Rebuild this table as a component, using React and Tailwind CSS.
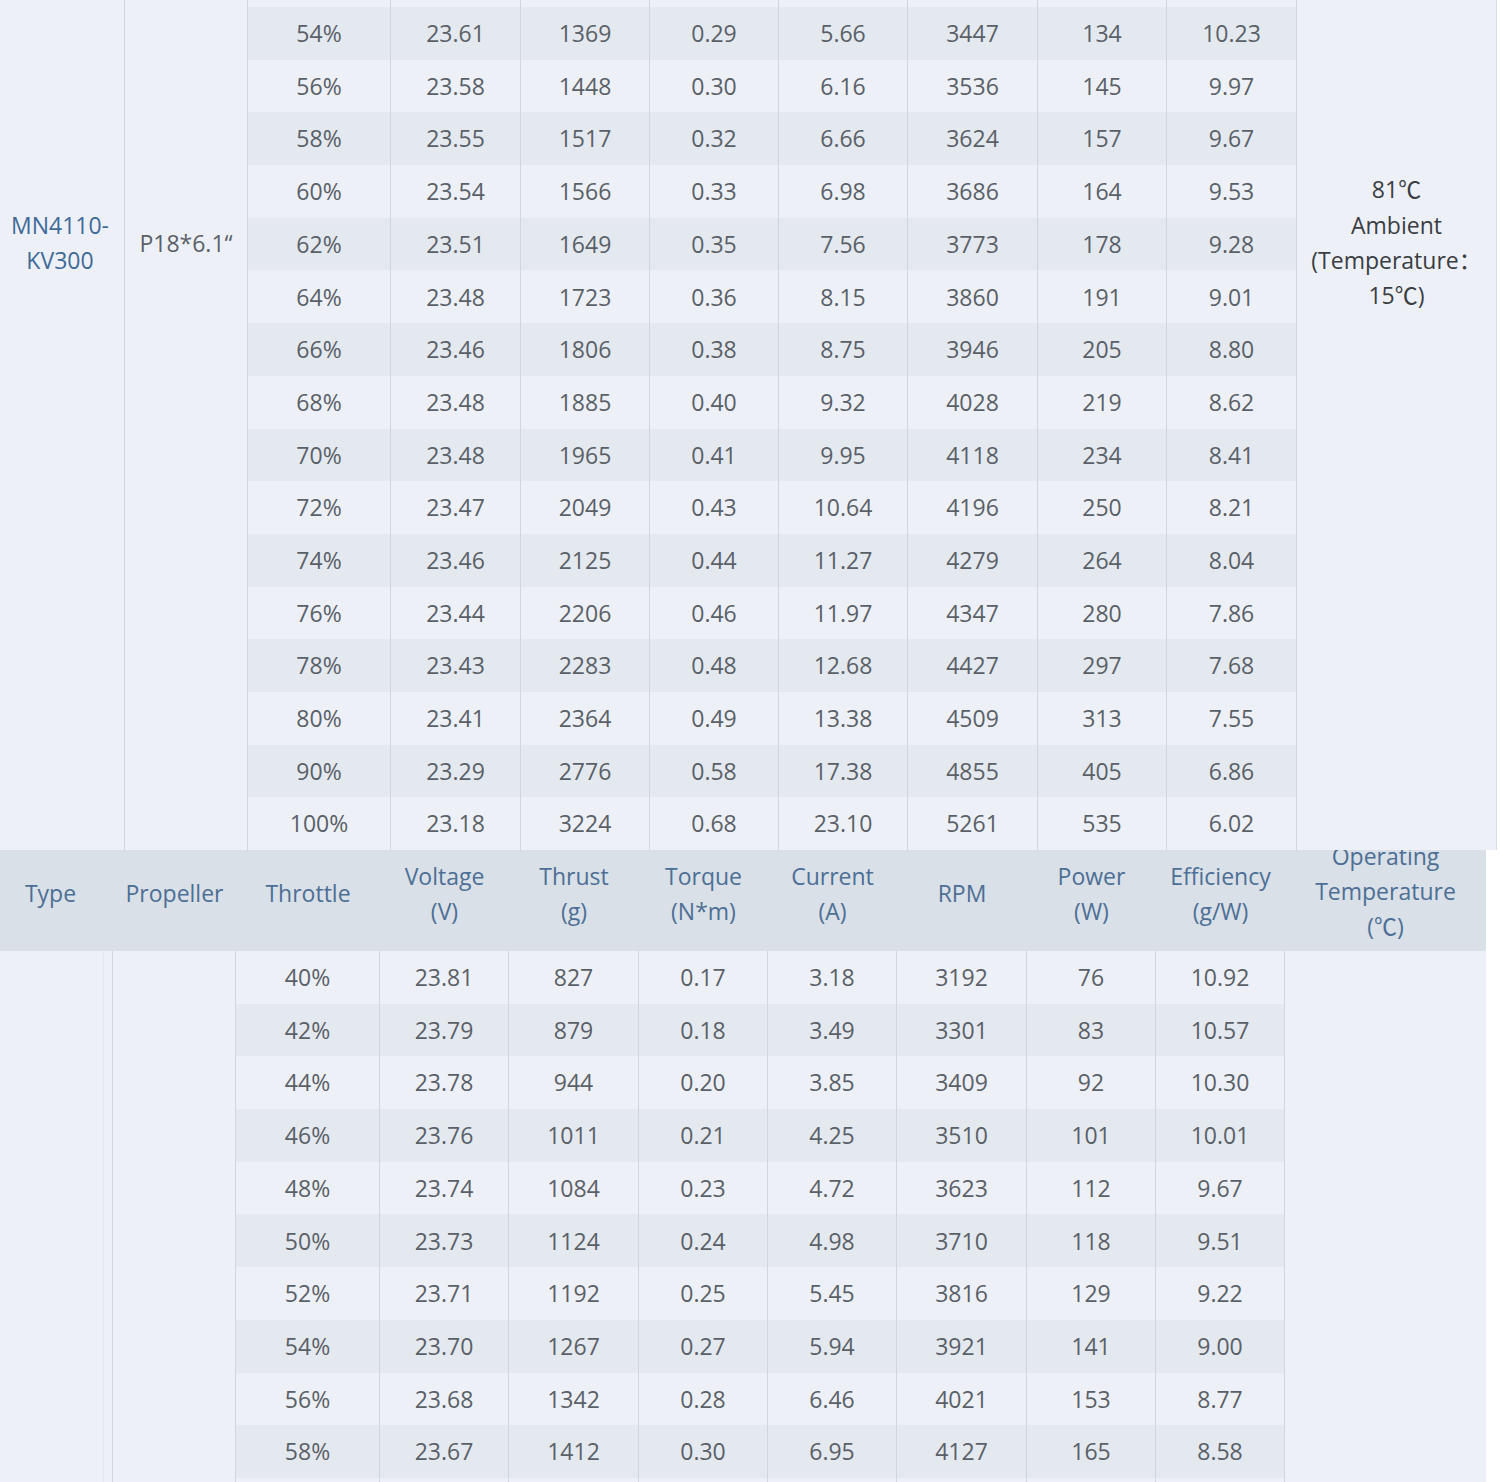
const topRows = [
  ["54%", "23.61", "1369", "0.29", "5.66", "3447", "134", "10.23"],
  ["56%", "23.58", "1448", "0.30", "6.16", "3536", "145", "9.97"],
  ["58%", "23.55", "1517", "0.32", "6.66", "3624", "157", "9.67"],
  ["60%", "23.54", "1566", "0.33", "6.98", "3686", "164", "9.53"],
  ["62%", "23.51", "1649", "0.35", "7.56", "3773", "178", "9.28"],
  ["64%", "23.48", "1723", "0.36", "8.15", "3860", "191", "9.01"],
  ["66%", "23.46", "1806", "0.38", "8.75", "3946", "205", "8.80"],
  ["68%", "23.48", "1885", "0.40", "9.32", "4028", "219", "8.62"],
  ["70%", "23.48", "1965", "0.41", "9.95", "4118", "234", "8.41"],
  ["72%", "23.47", "2049", "0.43", "10.64", "4196", "250", "8.21"],
  ["74%", "23.46", "2125", "0.44", "11.27", "4279", "264", "8.04"],
  ["76%", "23.44", "2206", "0.46", "11.97", "4347", "280", "7.86"],
  ["78%", "23.43", "2283", "0.48", "12.68", "4427", "297", "7.68"],
  ["80%", "23.41", "2364", "0.49", "13.38", "4509", "313", "7.55"],
  ["90%", "23.29", "2776", "0.58", "17.38", "4855", "405", "6.86"],
  ["100%", "23.18", "3224", "0.68", "23.10", "5261", "535", "6.02"],
];

const bottomRows = [
  ["40%", "23.81", "827", "0.17", "3.18", "3192", "76", "10.92"],
  ["42%", "23.79", "879", "0.18", "3.49", "3301", "83", "10.57"],
  ["44%", "23.78", "944", "0.20", "3.85", "3409", "92", "10.30"],
  ["46%", "23.76", "1011", "0.21", "4.25", "3510", "101", "10.01"],
  ["48%", "23.74", "1084", "0.23", "4.72", "3623", "112", "9.67"],
  ["50%", "23.73", "1124", "0.24", "4.98", "3710", "118", "9.51"],
  ["52%", "23.71", "1192", "0.25", "5.45", "3816", "129", "9.22"],
  ["54%", "23.70", "1267", "0.27", "5.94", "3921", "141", "9.00"],
  ["56%", "23.68", "1342", "0.28", "6.46", "4021", "153", "8.77"],
  ["58%", "23.67", "1412", "0.30", "6.95", "4127", "165", "8.58"],
];

// data column widths (throttle .. efficiency)
const topCols = ["w-[143px]", "w-[130px]", "w-[129px]", "w-[129px]", "w-[129px]", "w-[130px]", "w-[129px]", "w-[130px]"];
const bottomCols = ["w-[144px]", "w-[129px]", "w-[130px]", "w-[129px]", "w-[129px]", "w-[130px]", "w-[129px]", "w-[129px]"];

const font = { fontFamily: '"Open Sans", "Noto Sans CJK SC", sans-serif' };

const DataRow = ({ cells, cols, shaded, height = "h-[52.7px]" }) => (
  <div className={`flex shrink-0 ${height} ${shaded ? "bg-[#e4e9f0]" : "bg-[#edf1f7]"}`}>
    {cols.map((w, i) => (
      <div
        key={i}
        className={`${w} shrink-0 h-full flex items-center justify-center border-r border-[#cfd6de] text-[23px] text-[#5a6067]`}
      >
        {cells ? cells[i] : ""}
      </div>
    ))}
  </div>
);

const headers = [
  ["w-[113px] pr-[12px]", ["Type"]],
  ["w-[123px]", ["Propeller"]],
  ["w-[144px]", ["Throttle"]],
  ["w-[129px]", ["Voltage", "(V)"]],
  ["w-[130px]", ["Thrust", "(g)"]],
  ["w-[129px]", ["Torque", "(N*m)"]],
  ["w-[129px]", ["Current", "(A)"]],
  ["w-[130px]", ["RPM"]],
  ["w-[129px]", ["Power", "(W)"]],
  ["w-[129px]", ["Efficiency", "(g/W)"]],
  ["w-[201px] pb-[18px]", ["Operating", "Temperature", "(℃)"]],
];

export default function App() {
  return (
    <div className="w-[1500px] h-[1482px] overflow-hidden bg-white" style={font}>
      {/* upper table, scrolled so only the lower part shows */}
      <div className="flex h-[850px] w-[1497px] bg-[#edf1f7] border-r border-[#d6dce3] overflow-hidden">
        <div className="w-[125px] shrink-0 border-r border-[#cfd6de] flex items-center justify-center pb-[364px] pr-[4px] text-center text-[23px] leading-[35px] text-[#3f6a98]">
          MN4110-
          <br />
          KV300
        </div>
        <div className="w-[123px] shrink-0 border-r border-[#cfd6de] flex items-center justify-center pb-[364px] text-[23px] leading-[35px] text-[#5a6068]">
          P18*6.1“
        </div>
        <div className="w-[1049px] shrink-0 flex flex-col">
          <DataRow cols={topCols} height="h-[7px]" />
          {topRows.map((r, i) => (
            <DataRow key={r[0]} cells={r} cols={topCols} shaded={i % 2 === 0} />
          ))}
        </div>
        <div className="w-[199px] shrink-0 flex items-center justify-center pb-[364px] text-center text-[23px] leading-[35.3px] text-[#3a3d42]">
          81℃
          <br />
          Ambient
          <br />
          (Temperature：
          <br />
          15℃)
        </div>
      </div>

      {/* header of the lower table */}
      <div className="flex h-[101px] w-[1486px] bg-[#d9e0e7]">
        {headers.map(([w, lines]) => (
          <div
            key={lines[0]}
            className={`${w} shrink-0 h-full overflow-hidden flex flex-col items-center justify-center pb-[14px] text-center text-[23px] leading-[34.5px] text-[#4d6f95]`}
          >
            {lines.map((l) => (
              <span key={l} className="block whitespace-nowrap">
                {l === "(℃)" ? (
                  <>
                    (<span className="font-['Noto_Sans_CJK_SC']">℃</span>)
                  </>
                ) : (
                  l
                )}
              </span>
            ))}
          </div>
        ))}
      </div>

      {/* lower table body */}
      <div className="flex h-[531px] w-[1486px] bg-[#edf1f7] overflow-hidden">
        <div className="w-[113px] shrink-0 border-r border-[#cfd6de]">
          <div className="w-[104px] h-full border-r border-[#e2e7ee]" />
        </div>
        <div className="w-[123px] shrink-0 border-r border-[#cfd6de]" />
        <div className="w-[1049px] shrink-0 flex flex-col">
          {bottomRows.map((r, i) => (
            <DataRow key={r[0]} cells={r} cols={bottomCols} shaded={i % 2 === 1} />
          ))}
          <DataRow cols={bottomCols} height="h-[10px]" />
        </div>
        <div className="w-[201px] shrink-0" />
      </div>
    </div>
  );
}
